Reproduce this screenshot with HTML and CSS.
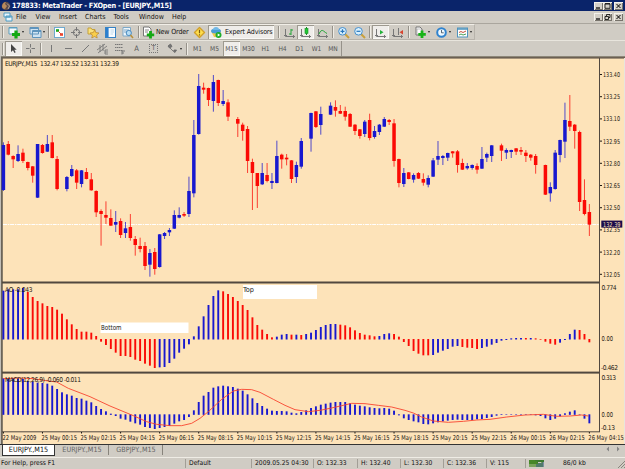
FILE: index.html
```html
<!DOCTYPE html>
<html lang="en">
<head>
  <meta charset="UTF-8">
  <meta name="viewport" content="width=device-width, initial-scale=1.0">
  <title>178833: MetaTrader - FXOpen - [EURJPY.,M15]</title>
  <link rel="stylesheet" href="styles.css">
</head>
<body>
  <div class="window">
    <div class="titlebar">
      <svg class="logo" width="10" height="10" viewBox="0 0 10 10"><circle cx="5" cy="5" r="4.3" fill="#5b4a48"/><path d="M1 5Q2 1 5 1L4 3L6 5L4 8Q1 8 1 5" fill="#b98a5c"/><path d="M6 2.5L8.5 5L7 8" stroke="#b0a29c" fill="none"/></svg>
      <span class="title-text">178833: MetaTrader - FXOpen - [EURJPY.,M15]</span>
      <div class="controls">
        <button><svg width="9" height="8" viewBox="0 0 9 8"><path d="M2 6H6" stroke="#000" stroke-width="1.2"/></svg></button>
        <button><svg width="9" height="8" viewBox="0 0 9 8"><path d="M2 2H7V6.3H2ZM2 1.6H7" stroke="#000" fill="none" stroke-width=".8"/></svg></button>
        <button class="close"><svg width="9" height="8" viewBox="0 0 9 8"><path d="M2.5 2L6.5 6M6.5 2L2.5 6" stroke="#000"/></svg></button>
      </div>
    </div>

    <div class="menubar">
      <svg class="logo" width="10" height="10" viewBox="0 0 10 10"><path d="M1 1H7V5H1ZM3 4H9V9H3Z" fill="#e8f4fb" stroke="#4f9cc4"/><path d="M3 5H9" stroke="#4f9cc4"/></svg>
      <span style="width:19.5px">File</span>
      <span style="width:23.5px">View</span>
      <span style="width:26px">Insert</span>
      <span style="width:28.5px">Charts</span>
      <span style="width:25.5px">Tools</span>
      <span style="width:33px">Window</span>
      <span>Help</span>
      <div class="controls">
        <button><svg width="9" height="8" viewBox="0 0 9 8"><path d="M2 6H6" stroke="#000" stroke-width="1.2"/></svg></button>
        <button><svg width="9" height="8" viewBox="0 0 9 8"><path d="M3.5 3V1.5H7V4.5H6M2 3.5H5.5V6.5H2Z" stroke="#000" fill="none" stroke-width=".8"/></svg></button>
        <button class="close"><svg width="9" height="8" viewBox="0 0 9 8"><path d="M2.5 2L6.5 6M6.5 2L2.5 6" stroke="#000"/></svg></button>
      </div>
    </div>

    <div class="toolbar standard">
      <i class="grip"></i>
      <div class="tool"><svg width="13" height="13" viewBox="0 0 13 13"><path d="M1 1.5H9V8H1Z" fill="#f4fafd" stroke="#5b9dbd"/><path d="M1 2H9" stroke="#5b9dbd"/><path d="M8 4.5V12.5M4 8.5H12" stroke="#14a914" stroke-width="3.2"/></svg><b class="drop"></b></div>
      <div class="tool"><svg width="13" height="13" viewBox="0 0 13 13"><path d="M1 1.5H9.5V8H1ZM3.5 4.5H12V11.5H3.5Z" fill="#cfe3f2" stroke="#5e94bd"/><path d="M1 2.5H9.5M4 5.5H12" stroke="#5e94bd"/></svg><b class="drop"></b></div>
      <i class="grip"></i>
      <div class="tool"><svg width="13" height="13" viewBox="0 0 13 13"><rect x="1.5" y="1.5" width="10" height="10" fill="#fff" stroke="#6fa9cf"/><path d="M3 4.5H6" stroke="#18a818" stroke-width="2.6"/><path d="M7 8.5H10" stroke="#e8452f" stroke-width="2.6"/><path d="M5.5 5.5L8 8" stroke="#e8452f"/></svg></div>
      <div class="tool"><svg width="13" height="13" viewBox="0 0 13 13"><circle cx="6.5" cy="6.5" r="3.2" fill="none" stroke="#777"/><path d="M6.5 1V5M6.5 8V12M1 6.5H5M8 6.5H12" stroke="#777"/></svg></div>
      <div class="tool"><svg width="13" height="13" viewBox="0 0 13 13"><path d="M1 2H4L5 3.5H8V8H1Z" fill="#fbe27a" stroke="#c5a13a"/><path d="M7.5 4L8.8 6.5L12 7L9.6 9L10.2 12L7.5 10.5L4.8 12L5.4 9L3 7L6.3 6.5Z" fill="#f9ce49" stroke="#b9852c" stroke-width=".7"/></svg></div>
      <div class="tool"><svg width="13" height="13" viewBox="0 0 13 13"><rect x="1.5" y="1.5" width="10" height="10" fill="#f8fcff" stroke="#3682c4"/><rect x="2" y="2" width="2.6" height="9" fill="#2b7fd0"/><path d="M6.5 4H10M6.5 6H10M6.5 8H9" stroke="#a7c8df" stroke-width=".7"/></svg></div>
      <div class="tool"><svg width="13" height="13" viewBox="0 0 13 13"><path d="M2 1.5H9.5V10H2Z" fill="#eef5fa" stroke="#7ca8c8"/><path d="M3 4H8M3 6H6" stroke="#7ca8c8"/><circle cx="7.8" cy="7" r="2.6" fill="#b5dcf4" stroke="#4a8bc0"/><path d="M9.5 9L12 12" stroke="#b8903a" stroke-width="1.5"/></svg></div>
      <i class="grip"></i>
      <div class="tool order"><svg width="13" height="13" viewBox="0 0 13 13"><path d="M1.5 1H7L9 3V10H1.5Z" fill="#fff" stroke="#777"/><path d="M3 4H7M3 6H6" stroke="#888"/><path d="M8.5 5V12.5M4.8 8.8H12.2" stroke="#14a914" stroke-width="2.8"/></svg><span>New Order</span></div>
      <div class="tool"><svg width="13" height="13" viewBox="0 0 13 13"><path d="M6.5 1.5L11.5 6.5L6.5 11.5L1.5 6.5Z" fill="#ffdf4d" stroke="#d1a02a" stroke-linejoin="round" stroke-width="1.4"/><path d="M6.5 3.8V7.3M6.5 8.3V9.4" stroke="#7b5a10" stroke-width="1.2"/></svg></div>
      <div class="tool pressed experts"><svg width="12" height="13" viewBox="0 0 12 13"><path d="M1 5Q6 9 11 5L9 11H4Z" fill="#efc94d"/><ellipse cx="6" cy="5" rx="5" ry="2.5" fill="#4a9dd7"/><path d="M3 4Q3 1 6 1Q9 1 9 4" fill="#71b8e6"/><circle cx="8.5" cy="9" r="3" fill="#1eae2b"/><path d="M7.7 7.5L10.2 9L7.7 10.5Z" fill="#fff"/></svg><span>Expert Advisors</span></div>
      <i class="grip"></i>
      <div class="tool"><svg width="13" height="13" viewBox="0 0 13 13"><path d="M2.5 3V10.5H12M1 9.5H4M10.5 9V12" stroke="#777" fill="none"/><path d="M8 3V9M6 8H8M8 4H10" stroke="#24a538"/></svg></div>
      <div class="tool pressed"><svg width="13" height="13" viewBox="0 0 13 13"><path d="M2.5 3V10.5H12M1 9.5H4M10.5 9V12" stroke="#777" fill="none"/><path d="M7.5 1V9" stroke="#168f24"/><rect x="6" y="2.5" width="3" height="5" fill="#23c736" stroke="#168f24" stroke-width=".6"/></svg></div>
      <div class="tool"><svg width="13" height="13" viewBox="0 0 13 13"><path d="M2.5 3V10.5H12M1 9.5H4M10.5 9V12" stroke="#777" fill="none"/><path d="M3 8Q5 3 7.5 5T11 7.5" stroke="#24a538" fill="none"/></svg></div>
      <i class="grip"></i>
      <div class="tool"><svg width="13" height="13" viewBox="0 0 13 13"><path d="M8 8L12 12" stroke="#c9a03c" stroke-width="2"/><circle cx="5.5" cy="5.3" r="3.8" fill="#d9f0fd" stroke="#458fce"/><path d="M3.5 5.3H7.5M5.5 3.3V7.3" stroke="#2374bd" stroke-width="1.2"/></svg></div>
      <div class="tool"><svg width="13" height="13" viewBox="0 0 13 13"><path d="M8 8L12 12" stroke="#c9a03c" stroke-width="2"/><circle cx="5.5" cy="5.3" r="3.8" fill="#d9f0fd" stroke="#458fce"/><path d="M3.5 5.3H7.5" stroke="#2374bd" stroke-width="1.2"/></svg></div>
      <i class="grip"></i>
      <div class="tool pressed"><svg width="13" height="13" viewBox="0 0 13 13"><path d="M2.5 3V10.5H12M1 9.5H4M10.5 9V12" stroke="#777" fill="none"/><path d="M6 4L9.5 6.3L6 8.6Z" fill="#24b13a"/></svg></div>
      <div class="tool"><svg width="13" height="13" viewBox="0 0 13 13"><path d="M2.5 3V10.5H12M1 9.5H4M10.5 9V12M7.5 2V9" stroke="#777" fill="none"/><path d="M12 4L8.5 6.3L12 8.6Z" fill="#d8432e"/></svg></div>
      <i class="grip"></i>
      <div class="tool"><svg width="13" height="13" viewBox="0 0 13 13"><path d="M2 1H6L8 3V9H2Z" fill="#fff" stroke="#777"/><path d="M3 3H8V9H3Z" fill="none" stroke="#999" stroke-width=".6"/><path d="M8 4.5V12M4.3 8.3H11.8" stroke="#17b317" stroke-width="2.8"/></svg><b class="drop"></b></div>
      <div class="tool"><svg width="13" height="13" viewBox="0 0 13 13"><circle cx="6.5" cy="6.5" r="4.3" fill="#eef8ff" stroke="#2f83cf" stroke-width="2"/><path d="M6.5 4V6.8H8.7" stroke="#345" fill="none" stroke-width=".8"/></svg><b class="drop"></b></div>
      <div class="tool"><svg width="13" height="13" viewBox="0 0 13 13"><rect x="1.5" y="2" width="10" height="9" fill="#fff" stroke="#4e93bd"/><path d="M2 3H11" stroke="#4e93bd" stroke-width="1.5"/><path d="M3 6.5L5 5.5L7 6.5L10 5" stroke="#c5503e" fill="none"/><path d="M3 9L5 8L7 9L10 8" stroke="#4a9e58" fill="none"/></svg><b class="drop"></b></div>
    </div>

    <div class="toolbar drawing">
      <i class="grip"></i>
      <div class="tool pressed"><svg width="13" height="13" viewBox="0 0 13 13"><path d="M4 2V10L6 8.3L7.5 11L8.7 10.3L7.3 7.8H9.7Z" fill="#444"/></svg></div>
      <div class="tool"><svg width="13" height="13" viewBox="0 0 13 13"><path d="M6.5 2V5.5M6.5 7.5V11M2 6.5H5.5M7.5 6.5H11" stroke="#777"/></svg></div>
      <i class="grip"></i>
      <div class="tool"><svg width="13" height="13" viewBox="0 0 13 13"><path d="M6.5 3V10" stroke="#777"/></svg></div>
      <div class="tool"><svg width="13" height="13" viewBox="0 0 13 13"><path d="M3 6.5H10" stroke="#777"/></svg></div>
      <div class="tool"><svg width="13" height="13" viewBox="0 0 13 13"><path d="M3 10L10 3" stroke="#777"/></svg></div>
      <div class="tool"><svg width="13" height="13" viewBox="0 0 13 13"><path d="M1 8L9 2M2 11L11 4M4 3V10M7 2V9M9 8H12M9 10H12M9 12H12M9 8V12" stroke="#777" stroke-width=".9"/></svg></div>
      <div class="tool"><svg width="13" height="13" viewBox="0 0 13 13"><path d="M2 2.5H10M2 5.5H10M2 8.5H9" stroke="#777" stroke-dasharray="1.5 .5"/><path d="M9 8V12.5M9 9H12M9 11H11" stroke="#777"/></svg></div>
      <div class="tool letter">A</div>
      <div class="tool letter"><span class="boxed">T</span></div>
      <div class="tool"><svg width="13" height="13" viewBox="0 0 13 13"><path d="M2 4L4.5 2L6 4.5L3.5 6ZM8 8L10.5 8L9 10.5L7.5 9.5ZM4 6L7 9" fill="#777" stroke="#666" stroke-width=".8"/></svg><b class="drop"></b></div>
      <i class="grip"></i>
      <div class="tool period">M1</div>
      <div class="tool period">M5</div>
      <div class="tool period pressed">M15</div>
      <div class="tool period">M30</div>
      <div class="tool period">H1</div>
      <div class="tool period">H4</div>
      <div class="tool period">D1</div>
      <div class="tool period">W1</div>
      <div class="tool period last">MN</div>
    </div>

    <!-- one svg for all three panels, y starts at the top edge of the chart window -->
    <svg class="chart" width="625" height="388" viewBox="0 56 625 388">
      <rect class="paper" x="0" y="56" width="625" height="388"/>
      <rect x="0" y="56" width="625" height="1.2" fill="#8d8779"/>
      <rect x="0" y="57" width="625" height="1.6" fill="#6b5f52"/>
      <rect x="0" y="56" width="1" height="388" fill="#c3bfb7"/>
      <rect x="1" y="57" width="1.8" height="387" fill="#6b6459"/>
      <rect x="624" y="58" width="1" height="386" fill="#e8e5dd"/>
      <path d="M3 224.5H600" stroke="#fff" stroke-dasharray="4 .8 1.5 .8"/>
      <g id="candles"></g>
      <g id="ao"></g>
      <g id="macd"></g>
      <polyline id="signal"/>
      <rect x="100.5" y="322.5" width="88" height="10.5" fill="#fff"/>
      <rect x="243" y="285" width="74" height="14" fill="#fff"/>
      <g class="frame">
        <rect x="2" y="281.5" width="598" height="2"/>
        <rect x="2" y="371.6" width="598" height="2"/>
        <rect x="2" y="431.3" width="598" height="1"/>
        <rect x="599" y="58" width="1" height="374"/>
      </g>
      <g class="label">
        <text x="5" y="66.2" textLength="114">EURJPY.,M15&#160; 132.47 132.52 132.31 132.39</text>
        <text x="5" y="292.2" textLength="27.5">AO -0.043</text>
        <text x="5" y="382.2" textLength="76">MACD(12,26,9) -0.060 -0.011</text>
        <text class="note" x="101" y="329.5" textLength="20.5" lengthAdjust="spacingAndGlyphs">Bottom</text>
        <text class="note" x="243" y="292.2" textLength="11" lengthAdjust="spacingAndGlyphs">Top</text>
        <text x="601.5" y="290.3" textLength="15">0.774</text>
        <text x="601.5" y="341.4" textLength="11.5" lengthAdjust="spacingAndGlyphs">0.00</text>
        <text x="601" y="370.2" textLength="17">-0.462</text>
        <text x="601.5" y="380.2" textLength="14.5">0.313</text>
        <text x="601.5" y="417.4" textLength="11.5" lengthAdjust="spacingAndGlyphs">0.00</text>
        <text x="601" y="430.2" textLength="14">-0.13</text>
      </g>
      <g id="prices" class="label"></g>
      <g id="times" class="label"></g>
      <rect x="601.3" y="220.6" width="21" height="7" fill="#1b0c4c"/>
      <text class="last-price" x="603" y="226.6" textLength="17.5" lengthAdjust="spacingAndGlyphs">132.39</text>
    </svg>

    <div class="tabs">
      <span class="tab active">EURJPY.,M15</span>
      <span class="tab">EURJPY.,M15</span>
      <span class="tab">GBPJPY.,M15</span>
      <span class="arrows"><svg width="20" height="8" viewBox="0 0 20 8"><path d="M6 1.5V6.5L3.5 4ZM14 1.5V6.5L16.5 4Z" fill="#858585"/></svg></span>
    </div>

    <div class="status">
      <span>For Help, press F1</span>
      <span>Default</span>
      <span>2009.05.25 04:30</span>
      <span>O: 132.33</span>
      <span>H: 132.40</span>
      <span>L: 132.30</span>
      <span>C: 132.36</span>
      <span>V: 115</span>
      <span class="traffic"><svg width="16" height="8" viewBox="0 0 16 8"><path d="M0 0H15V2H9V4H0Z" fill="#3c7a30"/><path d="M1 0V7M3 0V7M5 0V7M7 1V7M9 3V7M11 3V7M13 2V7" stroke="#4d8f27" stroke-width="1.3"/><path d="M8 4V7M10 3V7M12 3V7M14 2V7" stroke="#28537c"/></svg>86/0 kb</span>
      <span class="size-grip"><svg width="9" height="9" viewBox="0 0 9 9"><path d="M1 9L9 1M4 9L9 4M7 9L9 7" stroke="#8a867e"/></svg></span>
    </div>
  </div>
  <script src="script.js"></script>
</body>
</html>
```

FILE: styles.css
```css
body {
  margin: 0;
  font-family: "DejaVu Sans Condensed", "DejaVu Sans", sans-serif;
  font-size: 6.7px;
  color: #111;
  background: #d0ccc4;
}

.window {
  display: flex;
  flex-direction: column;
  width: 625px;
  height: 469px;
  overflow: hidden;
}

.titlebar {
  display: flex;
  align-items: center;
  height: 11px;
  background: #0a246a;
  color: white;
}

.logo {
  margin-left: 1px;
  flex: none;
}

.title-text {
  margin-left: 1px;
  font-size: 7.3px;
  font-weight: bold;
  letter-spacing: -0.25px;
  white-space: nowrap;
}

.menubar {
  display: flex;
  align-items: center;
  height: 12px;
  border-bottom: 1px solid #aaa69e;
}

.menubar .logo {
  margin: 0 3px 0 3px;
}

.menubar span {
  flex: none;
  font-size: 7px;
}

.controls {
  display: flex;
  margin-left: auto;
  margin-right: 2px;
}

.controls button {
  width: 9px;
  height: 8px;
  padding: 0;
  border: 0;
  background: #d4d0c8;
  box-shadow: inset 1px 1px #f4f2ec, inset -1px -1px #77736b;
}

.controls svg {
  display: block;
}

.controls .close {
  margin-left: 2px;
}

.toolbar {
  display: grid;
  justify-content: start;
  box-sizing: border-box;
}

.standard {
  height: 16px;
  grid-template-columns: 5px 21px 21px 4px 17px 17px 17px 17px 17px 6px 48px 18px 68px 5px 16px 17px 16px 5px 16px 17px 4px 17px 17px 6px 20px 21px 21px;
  width: 475px;
  border-top: 1px solid #f1eee7;
  border-right: 1px solid #b8b4ac;
  border-bottom: 1px solid #b8b4ac;
}

.drawing {
  height: 16px;
  grid-template-columns: 5px 17px 17px 4px repeat(7, 17px) 23px 4px repeat(9, 17px);
  border-top: 1px solid #e8e5dd;
}

.tool {
  display: flex;
  align-items: center;
  justify-content: center;
  white-space: nowrap;
}

.tool svg {
  flex: none;
}

.pressed {
  background: #efedea;
  box-shadow: inset 1px 1px #9d998f, inset -1px -1px #faf9f6;
}

.grip {
  justify-self: center;
  align-self: center;
  width: 1px;
  height: 12px;
  background: #96928a;
  border-right: 1px solid #f0ede6;
}

.drop {
  margin-left: 1px;
  border: 1.7px solid transparent;
  border-top: 2px solid #222;
  border-bottom: 0;
}

.order, .experts {
  justify-content: start;
  font-size: 7px;
  letter-spacing: -0.12px;
}

.order {
  gap: 1px;
}

.experts {
  padding-left: 2px;
  gap: 3px;
  width: 64px;
}

.letter {
  color: #555;
  font-size: 7.5px;
}

.boxed {
  width: 7px;
  height: 7px;
  border: 1px dotted #777;
  font-size: 6.5px;
  line-height: 7px;
  text-align: center;
}

.period {
  color: #555;
  font-size: 6.6px;
}

.last {
  border-right: 1px solid #96928a;
}

.chart {
  display: block;
  flex: none;
}

.paper {
  fill: #fde3b9;
}

.frame {
  fill: #51483f;
}

.label {
  font-size: 6.6px;
  fill: #1c1812;
}

.note {
  font-size: 7px;
}

.last-price {
  font-size: 6.6px;
  fill: #fde3b9;
}

.up {
  fill: #1818cf;
}

.down {
  fill: #fb0a05;
}

#signal {
  fill: none;
  stroke: #f8442f;
  stroke-width: 0.9;
}

.tabs {
  display: flex;
  height: 12px;
  border-top: 1px solid #333;
  font-size: 7.2px;
  line-height: 10px;
}

.tab {
  width: 53px;
  height: 10px;
  box-sizing: border-box;
  border-right: 1px solid #88847c;
  margin-left: 1px;
  text-align: center;
  color: #666;
}

.tab.active {
  margin-left: 2px;
  height: 11px;
  background: white;
  border: 1px solid #333;
  border-top: 0;
  color: #111;
}

.arrows {
  margin-left: auto;
  margin-right: 2px;
}

.status {
  display: grid;
  grid-template-columns: 185px 66px 62px 44px 43px 43px 43px 39px 92px 8px;
  align-items: center;
  flex: 1;
  border-top: 1px solid #efece5;
  line-height: 9px;
}

.status span {
  padding-left: 3px;
  border-left: 1px solid #a29e96;
  white-space: nowrap;
}

.status span:first-child {
  padding-left: 1px;
  border-left: 0;
}

.status .traffic {
  display: flex;
  align-items: center;
  gap: 18px;
}

.status .size-grip {
  border: 0;
  padding: 0;
  height: 9px;
}
```

FILE: script.js
```js
const STEP = 4.883;
const FIRST = 3.4;

// [index, direction, high, open/close top, open/close bottom, low], three units per pixel
const candles = [
  [0,'u',217,225,360,363],[1,'d',213,222,254,256],[2,'d',256,258,268,294],[3,'u',226,252,273,276],
  [4,'d',236,248,273,279],[5,'d',275,276,294,301],[6,'d',288,289,317,338],[7,'u',222,222,383,384],
  [8,'d',222,225,249,251],[9,'u',195,222,245,246],[10,'d',195,217,264,265],[11,'d',258,267,357,361],
  [13,'u',318,321,357,364],[14,'u',285,297,318,321],[15,'d',297,301,338,357],[16,'u',300,301,342,352],
  [17,'d',294,306,327,328],[18,'d',309,328,361,362],[19,'d',361,363,427,441],[20,'d',418,423,432,527],
  [21,'d',394,435,443,462],[22,'d',418,444,467,468],[23,'u',423,456,464,486],[24,'d',445,453,495,504],
  [25,'u',456,475,489,504],[26,'d',432,471,504,512],[27,'d',498,507,525,557],[28,'d',503,528,537,547],
  [29,'d',516,528,588,600],[30,'u',537,549,584,620],[31,'d',534,546,597,614],[32,'u',492,493,591,593],
  [33,'u',486,489,498,507],[34,'u',474,480,487,498],[35,'u',421,435,476,477],[36,'u',412,435,443,445],
  [37,'d',426,432,437,441],[38,'u',320,363,432,441],[39,'u',150,195,370,382],[40,'u',12,48,192,194],
  [41,'d',38,53,59,71],[42,'d',53,54,90,108],[43,'u',15,36,93,125],[44,'d',29,30,99,108],
  [45,'u',60,93,102,108],[46,'d',88,97,140,153],[48,'d',141,147,161,201],[49,'d',158,164,183,212],
  [50,'d',168,177,273,309],[51,'d',266,276,309,420],[52,'d',309,309,348,414],[53,'u',279,309,343,345],
  [54,'d',279,315,333,337],[55,'u',309,333,339,357],[56,'u',212,258,339,340],[57,'d',251,254,268,296],
  [58,'d',252,263,268,286],[59,'d',270,271,327,339],[60,'u',275,285,321,339],[61,'u',204,213,290,296],
  [63,'u',128,129,206,245],[64,'d',123,124,171,174],[65,'u',110,132,165,194],[67,'u',97,107,134,135],
  [68,'d',91,111,122,140],[69,'d',105,123,131,132],[70,'d',110,123,140,152],[71,'d',129,132,170,171],
  [72,'d',162,164,183,195],[73,'d',177,178,198,206],[74,'u',150,155,192,201],[75,'d',131,150,204,211],
  [76,'u',168,183,201,206],[77,'u',162,164,186,195],[78,'u',141,147,170,171],[79,'d',147,150,156,165],
  [80,'d',147,160,273,290],[81,'d',266,267,339,352],[82,'u',294,309,342,351],[83,'d',306,307,327,328],
  [84,'u',310,315,329,338],[85,'d',306,309,326,327],[86,'d',310,327,338,347],[87,'u',316,324,344,352],
  [88,'u',264,271,320,321],[89,'u',213,258,269,285],[90,'u',255,258,264,285],[91,'u',248,249,263,273],
  [92,'d',243,244,250,263],[93,'d',240,244,285,308],[94,'d',266,279,299,300],[95,'u',279,288,295,299],
  [96,'u',283,285,294,299],[97,'d',280,288,299,311],[98,'u',231,267,296,297],[99,'u',248,252,263,276],
  [100,'u',225,226,258,276],[102,'d',221,226,242,273],[103,'u',235,240,248,267],[104,'u',239,240,246,264],
  [105,'d',234,235,245,255],[106,'d',231,240,245,255],[107,'d',240,248,258,276],[108,'d',252,254,263,272],
  [109,'d',252,258,285,311],[111,'d',284,285,374,375],[112,'u',337,351,370,395],[113,'u',240,248,357,359],
  [114,'u',209,210,255,277],[115,'u',98,150,215,264],[116,'d',75,153,170,183],[117,'d',162,164,183,236],
  [118,'d',182,186,396,423],[119,'d',328,390,432,436],[120,'d',402,426,464,498]
];

const ao = [
  32,28,28,28,24,36,51,63,70,78,81,89,101,118,133,147,155,155,158,168,185,195,207,218,228,228,231,239,243,251,
  257,264,262,261,249,236,218,206,193,169,139,109,75,48,31,34,42,51,63,75,90,112,135,149,162,172,170,164,162,
  164,164,165,162,158,150,141,135,132,132,134,136,142,151,159,164,166,169,168,162,160,162,170,186,198,213,221,
  226,226,225,218,212,207,200,198,201,203,204,207,204,200,194,189,182,180,175,174,174,174,174,175,179,185,191,
  194,188,180,162,149,150,162,187
];
// first index of every colour run, starting with up
const aoTurns = [0,5,32,45,56,59,60,61,62,69,77,80,88,94,98,107,108,109,114,118];

const macd = [
  295,294,294,295,297,303,305,308,309,311,317,327,337,343,347,354,356,362,367,378,387,394,401,408,416,419,425,
  430,434,441,444,447,444,441,438,431,424,420,411,391,366,347,336,323,319,317,319,321,326,332,343,355,369,378,
  386,392,393,393,394,398,400,396,391,384,379,374,371,368,366,366,366,370,374,377,379,382,384,385,384,386,392,
  406,415,420,424,427,432,433,430,427,424,422,420,419,420,420,420,418,417,414,411,407,405,403,403,403,403,403,
  403,406,408,415,420,416,409,400,395,391,403,416,430
];

const signal = [
  [10,296],[60,294],[100,296],[145,303],[170,306],[205,325],[270,350],[330,378],[400,407],[440,425],[470,433],
  [510,437],[545,437],[575,430],[600,415],[625,395],[665,358],[700,333],[725,328],[755,329],[780,337],[820,358],
  [855,376],[885,389],[925,395],[960,391],[990,385],[1025,377],[1055,370],[1095,371],[1135,376],[1175,381],
  [1215,391],[1240,399],[1265,411],[1300,423],[1345,427],[1390,424],[1430,420],[1470,418],[1520,411],
  [1575,405],[1630,403],[1670,409],[1710,408],[1745,405],[1765,408]
];

function barX(i) {
  return FIRST + i * STEP;
}

function rect(cls, center, width, top, bottom, opacity) {
  return `<rect class="${cls}" x="${(center - width / 2).toFixed(2)}" y="${top.toFixed(2)}" width="${width}" height="${(bottom - top).toFixed(2)}" opacity="${opacity || 1}"/>`;
}

function histogram(id, values, zero, colour) {
  document.getElementById(id).innerHTML = values.map((v, i) => {
    const top = Math.min(v, zero);
    const bottom = Math.max(v, zero + 1.5);
    return rect(colour(i), barX(i), 1.9, 280 + top / 3, 280 + bottom / 3);
  }).join('');
}

document.getElementById('candles').innerHTML = candles.map(([i, dir, high, top, bottom, low]) => {
  const cls = dir === 'u' ? 'up' : 'down';
  return rect(cls, barX(i), 1, 70 + high / 3, 70 + low / 3, 0.75) + rect(cls, barX(i), 3.5, 70 + top / 3, 70 + bottom / 3);
}).join('');

histogram('ao', ao, 177, i => aoTurns.filter(t => t <= i).length % 2 ? 'up' : 'down');
histogram('macd', macd, 403, () => 'up');

document.getElementById('signal').setAttribute('points', signal.map(([x, y]) => `${x / 3},${280 + y / 3}`).join(' '));

// price scale
let prices = '';
for (let k = 0; k < 10; k++) {
  const y = 74.5 + k * 22.2;
  prices += `<rect x="600" y="${y - 0.5}" width="2" height="1"/><text x="603" y="${y + 2.4}" textLength="17" lengthAdjust="spacingAndGlyphs">${(133.4 - k * 0.15).toFixed(2)}</text>`;
}
document.getElementById('prices').innerHTML = prices;

// time scale, one label every 8 bars
let times = '';
for (let k = 0; k < 16; k++) {
  const hour = String((k - 1) * 2 % 24).padStart(2, '0');
  const text = k === 0 ? '22 May 2009' : `${k < 13 ? 25 : 26} May ${hour}:15`;
  const x = barX(k * 8);
  times += `<rect x="${x - 0.5}" y="432" width="1" height="1.5"/><text x="${x - 1}" y="439.7" textLength="${k === 0 ? 34 : 35.5}" lengthAdjust="spacingAndGlyphs">${text}</text>`;
}
document.getElementById('times').innerHTML = times;
```
